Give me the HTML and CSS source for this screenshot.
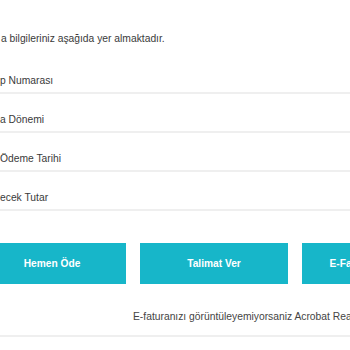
FILE: index.html
```html
<!DOCTYPE html>
<html lang="tr">
<head>
<meta charset="utf-8">
<link rel="stylesheet" href="styles.css">
</head>
<body>
<div class="page">
  <p class="intro">a bilgileriniz aşağıda yer almaktadır.</p>
  <div class="rows">
    <div class="row">p Numarası</div>
    <div class="row">a Dönemi</div>
    <div class="row">Ödeme Tarihi</div>
    <div class="row">ecek Tutar</div>
  </div>
  <div class="actions">
    <a class="btn">Hemen Öde</a>
    <a class="btn">Talimat Ver</a>
    <a class="btn">E-Fatura Görüntüle</a>
  </div>
  <p class="note">E-faturanızı görüntüleyemiyorsaniz Acrobat Reader programını indirin.</p>
</div>
</body>
</html>
```
FILE: styles.css
```css
html, body {
  margin: 0;
  padding: 0;
  background: #fff;
  overflow: hidden;
}
.page {
  width: 350px;
  font-family: "Liberation Sans", Arial, sans-serif;
  font-size: 10.3px;
  color: #3a3a3a;
}
.intro {
  margin: 0;
  padding-top: 32px;
  line-height: 14px;
  padding-left: 1px;
}
.rows {
  margin-top: 9px;
}
.row {
  height: 14px;
  line-height: 14px;
  padding: 19px 0 4px 0;
  border-bottom: 2px solid #efefef;
  white-space: nowrap;
}
.actions {
  display: flex;
  gap: 14px;
  margin: 32px 0 0 -22px;
  white-space: nowrap;
}
.btn {
  flex: 0 0 148px;
  height: 41px;
  display: flex;
  align-items: center;
  justify-content: center;
  background: #17b6c9;
  color: #fff;
  font-weight: bold;
  font-size: 10.2px;
}
.note {
  margin: 26px 0 0 0;
  padding: 0 0 11px 133px;
  line-height: 14px;
  white-space: nowrap;
  color: #444;
  border-bottom: 2px solid #efefef;
  width: 500px;
}
```
